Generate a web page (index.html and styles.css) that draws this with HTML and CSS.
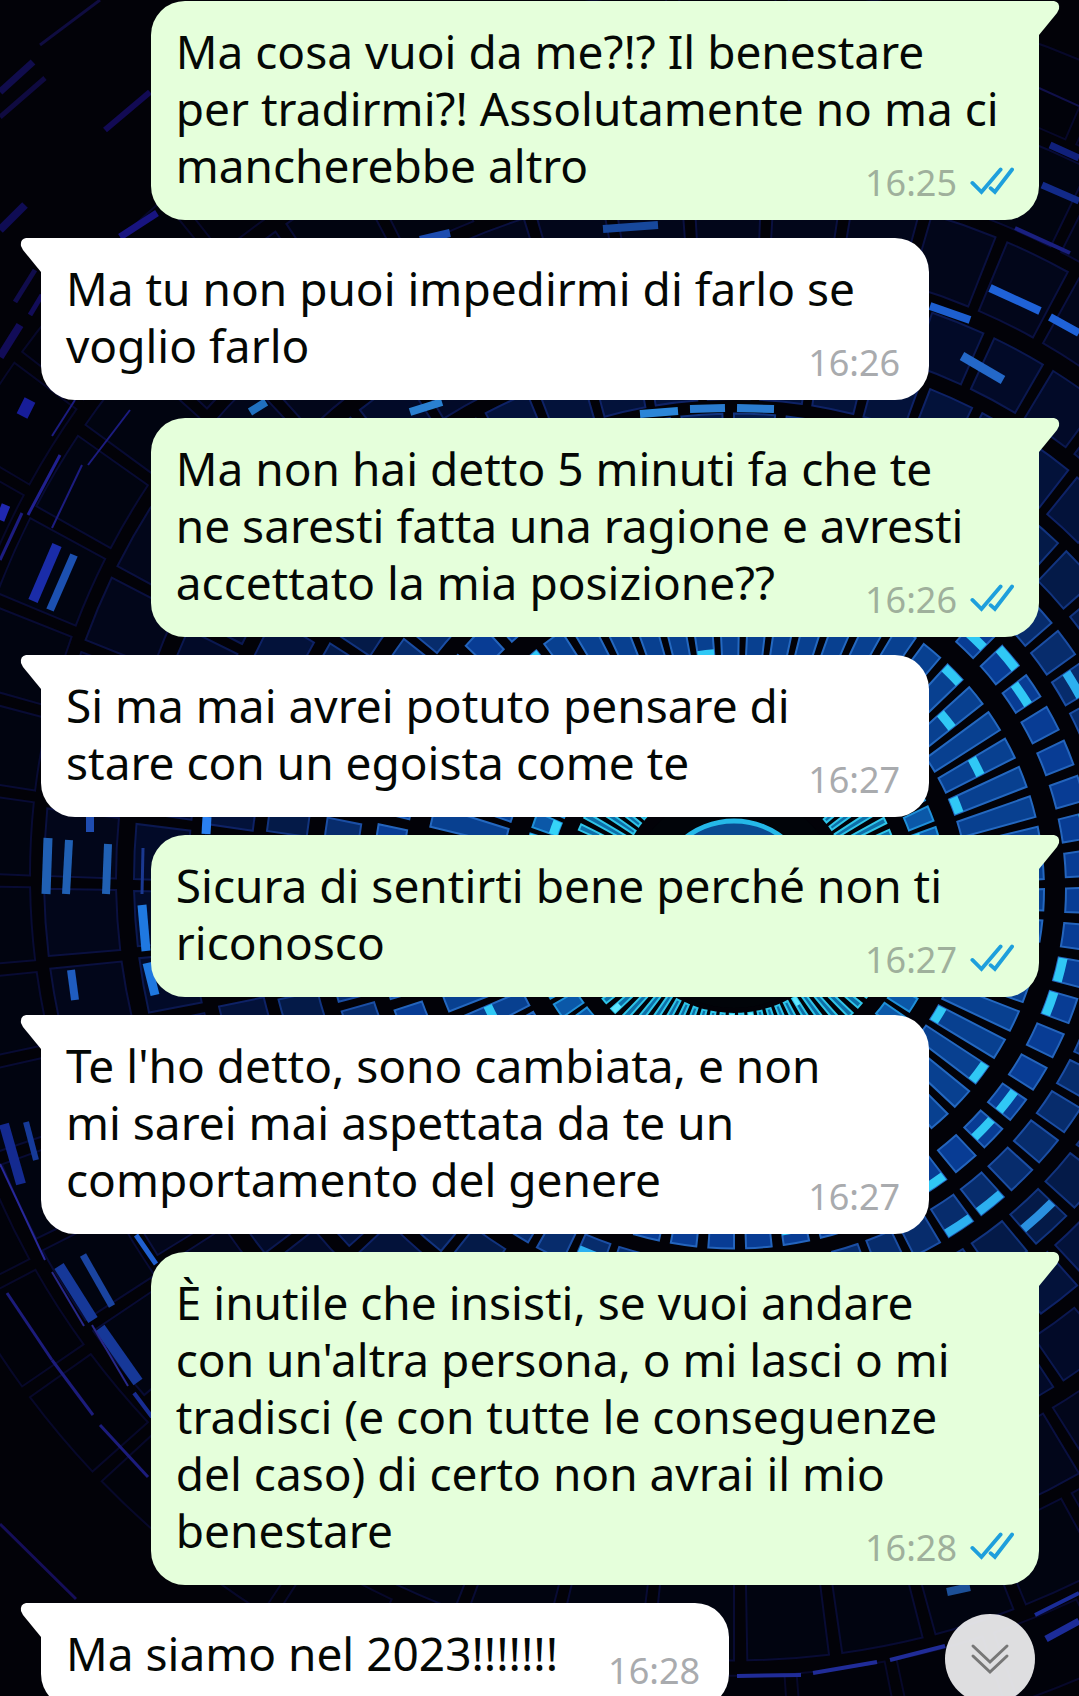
FILE: index.html
```html
<!DOCTYPE html>
<html lang="it">
<head>
    <meta charset="UTF-8">
    <meta name="viewport" content="width=device-width, initial-scale=1.0">
    <title>Chat</title>
    <link rel="stylesheet" href="styles.css">
</head>
<body>

    <!-- Wallpaper, filled by wallpaper.js -->
    <svg class="wallpaper" id="wallpaper" viewBox="0 0 1079 1696" preserveAspectRatio="xMidYMin slice" aria-hidden="true"></svg>

    <!-- Icon used in every sent message -->
    <svg class="sprite" aria-hidden="true">
        <symbol id="ticks" viewBox="0 0 46 30">
            <path d="M2.5 17 L12 26.5 L32 3 M21.5 22.5 L26 26.5 L44 3" fill="none" stroke="#1e9fdc" stroke-width="4" stroke-linecap="round"/>
        </symbol>
    </svg>

    <!-- Messages -->
    <main class="chat">
        <article class="bubble sent">
            <p>Ma cosa vuoi da me?!? Il benestare<br>per tradirmi?! Assolutamente no ma ci<br>mancherebbe altro</p>
            <div class="meta"><time>16:25</time><svg class="ticks"><use href="#ticks"/></svg></div>
        </article>

        <article class="bubble received">
            <p>Ma tu non puoi impedirmi di farlo se<br>voglio farlo</p>
            <div class="meta"><time>16:26</time></div>
        </article>

        <article class="bubble sent">
            <p>Ma non hai detto 5 minuti fa che te<br>ne saresti fatta una ragione e avresti<br>accettato la mia posizione??</p>
            <div class="meta"><time>16:26</time><svg class="ticks"><use href="#ticks"/></svg></div>
        </article>

        <article class="bubble received">
            <p>Si ma mai avrei potuto pensare di<br>stare con un egoista come te</p>
            <div class="meta"><time>16:27</time></div>
        </article>

        <article class="bubble sent">
            <p>Sicura di sentirti bene perché non ti<br>riconosco</p>
            <div class="meta"><time>16:27</time><svg class="ticks"><use href="#ticks"/></svg></div>
        </article>

        <article class="bubble received">
            <p>Te l'ho detto, sono cambiata, e non<br>mi sarei mai aspettata da te un<br>comportamento del genere</p>
            <div class="meta"><time>16:27</time></div>
        </article>

        <article class="bubble sent">
            <p>È inutile che insisti, se vuoi andare<br>con un'altra persona, o mi lasci o mi<br>tradisci (e con tutte le conseguenze<br>del caso) di certo non avrai il mio<br>benestare</p>
            <div class="meta"><time>16:28</time><svg class="ticks"><use href="#ticks"/></svg></div>
        </article>

        <article class="bubble received short">
            <p>Ma siamo nel 2023!!!!!!!</p>
            <div class="meta"><time>16:28</time></div>
        </article>
    </main>

    <button class="scroll-down" type="button" aria-label="Vai in fondo">
        <svg viewBox="0 0 40 34"><path d="M3 4 L20 20 L37 4 M3 14 L20 30 L37 14" fill="none" stroke="#777" stroke-width="3" stroke-linecap="round"/></svg>
    </button>

    <script src="wallpaper.js"></script>
</body>
</html>
```
FILE: styles.css
```css
* {
    margin: 0;
    padding: 0;
    box-sizing: border-box;
}

body {
    background-color: #020208;
    font-family: "Noto Sans", "Open Sans", sans-serif;
    color: #050805;
}

.wallpaper {
    position: fixed;
    top: 0;
    left: 0;
    width: 100%;
    height: 100%;
    z-index: -1;
}

.sprite {
    display: none;
}

.chat {
    display: flex;
    flex-direction: column;
    gap: 18px;
    height: 100vh;
    overflow: hidden;
    padding: 1px 40px 0 41px;
}

/* Text and time share one grid cell, the time sits in the corner */
.bubble {
    position: relative;
    display: grid;
    flex-shrink: 0;
    width: 89%;
    padding: 22px 25px 26px;
    border-radius: 34px;
}

.bubble p {
    grid-area: 1 / 1;
    font-size: 46px;
    line-height: 57px;
    white-space: nowrap;
}

.meta {
    grid-area: 1 / 1;
    align-self: end;
    justify-self: end;
    display: flex;
    align-items: center;
    gap: 13px;
    height: 22px;
    font-size: 36px;
    line-height: 22px;
    color: #a9abae;
}

.ticks {
    width: 44px;
    height: 30px;
    margin-bottom: 4px;
}

.sent {
    align-self: flex-end;
    border-top-right-radius: 0;
    background-color: #e5ffdb;
}

.sent .meta {
    color: #9fb09c;
}

.received {
    align-self: flex-start;
    border-top-left-radius: 0;
    background-color: #fff;
}

.received .meta {
    padding-right: 4px;
}

.short {
    display: flex;
    gap: 50px;
    width: auto;
}

/* Tails */
.bubble::before {
    content: "";
    position: absolute;
    top: 0;
    width: 22px;
    height: 34px;
    background-color: inherit;
}

.sent::before {
    left: calc(100% - 1px);
    clip-path: path("M0 0 H16 Q22 1 21 8 Q20 10 19 12 L1 34 H0 Z");
}

.received::before {
    right: calc(100% - 1px);
    clip-path: path("M22 0 H6 Q0 1 1 8 Q2 10 3 12 L21 34 H22 Z");
}

.scroll-down {
    position: fixed;
    right: 44px;
    bottom: -8px;
    width: 90px;
    height: 90px;
    display: flex;
    align-items: center;
    justify-content: center;
    border: none;
    border-radius: 50%;
    background-color: rgba(236, 236, 238, 0.94);
    cursor: pointer;
}

.scroll-down svg {
    width: 40px;
    height: 34px;
}
```
FILE: wallpaper.js
```js
const svg = document.getElementById("wallpaper");
const CX = 734;

let seed = 11;
function rand() {
    seed = (seed * 16807) % 2147483647;
    return seed / 2147483647;
}

function add(name, attrs) {
    const el = document.createElementNS("http://www.w3.org/2000/svg", name);
    for (const key in attrs) el.setAttribute(key, attrs[key]);
    svg.appendChild(el);
}

// the inner rings sit a bit lower than the outer ones
function point(r, a) {
    const cy = 900 - r * 0.035;
    return (CX + r * Math.cos(a)).toFixed(1) + " " + (cy + r * Math.sin(a)).toFixed(1);
}

function segment(r0, r1, a0, a1) {
    return "M" + point(r0, a0) + "L" + point(r1, a0) +
        "A" + r1 + " " + r1 + " 0 0 1 " + point(r1, a1) +
        "L" + point(r0, a1) + "A" + r0 + " " + r0 + " 0 0 0 " + point(r0, a0) + "Z";
}

// inner radius, outer radius, count, gap, fill, stroke, highlight, share of highlights
const rings = [
    [118, 168, 80, 0.55, "#0d6fa8", "#2fc4e8", "#5fe8ff", 0.3],
    [186, 212, 60, 0.3, "#0b58a8", "#1f8fd8", "#35d4f8", 0.45],
    [234, 310, 62, 0.32, "#084090", "#2468c0", "#30c8f5", 0.5],
    [332, 361, 60, 0.32, "#083c94", "#2464bc", "#30c8f5", 0.4],
    [378, 412, 66, 0.26, "#072c6c", "#1b4ea4", "#2cb0f0", 0.25],
    [430, 470, 56, 0.22, "#041a48", "#12347f", "#2a90e0", 0.25],
    [484, 530, 58, 0.2, "#03123a", "#0e2266", "#1f6ed0", 0.16],
    [546, 600, 56, 0.18, "#020a28", "#0b1850", "#1c58c0", 0.12],
    [618, 690, 54, 0.16, "#02061a", "#0a1040", "#173c98", 0.05],
    [704, 788, 52, 0.14, "#010410", "#080b34", "#122a7c", 0.03],
    [804, 880, 50, 0.12, "#01020a", "#07082a", "#101a60", 0.02]
];

rings.forEach(function (ring) {
    const [r0, r1, count, gap, fill, stroke, light, share] = ring;
    const step = Math.PI * 2 / count;
    for (let i = 0; i < count; i++) {
        const a0 = i * step;
        const a1 = a0 + step * (1 - gap);
        add("path", { d: segment(r0, r1, a0, a1), fill: fill, stroke: stroke, "stroke-width": 2 });
        if (rand() < share) {
            const w = Math.min(9, (r1 - r0) / 3);
            const r = r0 + Math.floor(rand() * 3) * (r1 - r0 - w) / 2;
            add("path", { d: segment(r, r + w, a0, a1), fill: light });
        }
    }
});

// iris
add("ellipse", { cx: CX, cy: 900, rx: 108, ry: 108, fill: "#010409" });
add("circle", { cx: CX, cy: 900, r: 79, fill: "#0a4a90", stroke: "#25b8e8", "stroke-width": 5 });

// single lights: x1, y1, x2, y2, width, color
const lights = [
    [930, 306, 970, 320, 8, "#1d5fd0"], [990, 288, 1040, 311, 8, "#1f62d8"], [1050, 317, 1079, 333, 8, "#1f62d8"],
    [962, 356, 1003, 380, 9, "#2468c8"], [1015, 228, 1070, 253, 4, "#1a2080"], [1050, 145, 1079, 158, 7, "#10207a"],
    [1039, 88, 1079, 106, 2, "#10104a"], [1042, 185, 1079, 201, 7, "#122a88"],
    [603, 229, 658, 225, 8, "#17489c"], [420, 240, 450, 233, 8, "#1c4cb0"],
    [640, 414, 678, 411, 8, "#2a86d8"], [690, 409, 725, 408, 8, "#2a7cd0"], [737, 408, 774, 409, 8, "#2a7cd0"],
    [410, 412, 442, 402, 8, "#2a80d0"], [250, 412, 266, 402, 8, "#2070c0"],
    [57, 545, 33, 601, 10, "#1a2ca8"], [74, 555, 50, 610, 8, "#1c50b0"], [30, 400, 22, 416, 12, "#171d98"],
    [75, 400, 52, 436, 2, "#1c1c80"], [130, 410, 88, 465, 2, "#1c1c80"], [60, 455, 28, 515, 3, "#202090"],
    [82, 465, 52, 528, 2, "#1c1c80"], [6, 505, 0, 520, 9, "#2028b0"], [22, 513, 0, 560, 3, "#1c1c80"],
    [48, 838, 46, 894, 9, "#2060b4"], [69, 840, 66, 894, 8, "#2060b4"], [108, 844, 106, 894, 8, "#2060b4"],
    [90, 817, 90, 832, 8, "#1f4cb0"], [207, 817, 206, 834, 9, "#2a80f0"], [142, 905, 146, 951, 9, "#1f78e0"],
    [147, 963, 155, 995, 9, "#1f78e0"], [71, 970, 75, 1000, 8, "#1f5cc0"], [143, 848, 142, 894, 3, "#1a3890"],
    [4, 1124, 21, 1184, 10, "#142a90"], [26, 1122, 36, 1160, 6, "#163a98"], [0, 1164, 45, 1260, 2, "#28289a"],
    [59, 1266, 93, 1320, 11, "#163898"], [83, 1255, 112, 1306, 7, "#1a44a0"], [100, 1328, 138, 1382, 11, "#163898"],
    [52, 1272, 84, 1326, 2, "#28288a"], [92, 1325, 128, 1386, 2, "#28288a"], [134, 1393, 152, 1417, 4, "#182c90"],
    [7, 1293, 52, 1360, 3, "#1c1c7c"], [52, 1360, 93, 1415, 3, "#1c1c7c"], [100, 1425, 148, 1477, 3, "#1c1c7c"],
    [136, 1235, 156, 1264, 5, "#2060d0"], [0, 1524, 76, 1599, 3, "#150e58"],
    [737, 1676, 801, 1675, 4, "#202c98"], [813, 1673, 877, 1662, 4, "#202c98"], [890, 1660, 945, 1646, 4, "#202c98"],
    [947, 1592, 970, 1587, 8, "#1c5098"], [1035, 1615, 1079, 1593, 4, "#1a2c98"], [1046, 1639, 1079, 1621, 7, "#1c2c98"],
    [100, 0, 40, 45, 3, "#0f0c40"], [0, 92, 33, 62, 7, "#100c4c"], [0, 117, 45, 78, 5, "#0f0a40"],
    [105, 130, 150, 92, 6, "#120a54"], [0, 230, 25, 205, 8, "#0f0c54"], [120, 237, 157, 213, 7, "#181480"],
    [15, 302, 35, 270, 5, "#100c4c"], [0, 357, 20, 325, 8, "#120c58"], [30, 315, 42, 295, 5, "#120c58"]
];

lights.forEach(function (l) {
    add("line", { x1: l[0], y1: l[1], x2: l[2], y2: l[3], "stroke-width": l[4], stroke: l[5] });
});
```
